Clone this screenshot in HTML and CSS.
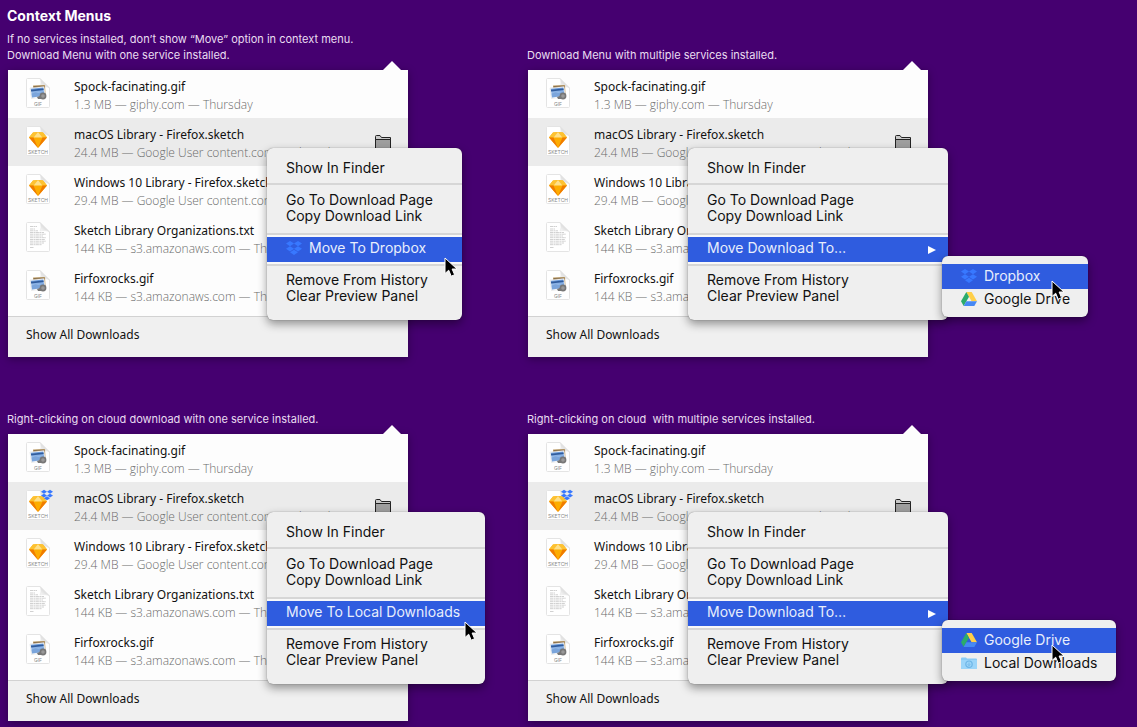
FILE: index.html
```html
<!DOCTYPE html>
<html lang="en">
<head>
<meta charset="utf-8">
<meta name="viewport" content="width=device-width, initial-scale=1">
<title>Context Menus</title>
<link rel="stylesheet" href="styles.css">
</head>
<body>
<svg class="sprite" aria-hidden="true">
  <defs>
    <linearGradient id="fold" x1="0" y1="1" x2="1" y2="0"><stop offset="0" stop-color="#fff"/><stop offset="0.5" stop-color="#ddd"/><stop offset="1" stop-color="#f6f6f6"/></linearGradient>
    <linearGradient id="sky" x1="0" y1="0" x2="0" y2="1"><stop offset="0" stop-color="#5f93d8"/><stop offset="1" stop-color="#c5dcf5"/></linearGradient>
  </defs>
  <symbol id="page" viewBox="0 0 24 30">
    <path d="M1.500.5H14L23.500 10v18.500a1 1 0 0 1-1 1h-21a1 1 0 0 1-1-1v-27a1 1 0 0 1 1-1z" fill="#fff" stroke="#e4e4e4"/>
    <path d="M14 .5c1.500 3 1 6.500 0 8.500 3-.8 7-.5 9.500 1z" fill="url(#fold)" stroke="#e2e2e2" stroke-width=".5"/>
  </symbol>
  <symbol id="gif" viewBox="0 0 24 30">
    <use href="#page"/>
    <path d="M7 7.500l12-.6.6 9-12 1z" fill="#c7a873"/>
    <path d="M7.500 8l11-.5.100 2-11 .8z" fill="#8c7149"/>
    <path d="M4 10l14-1.500 1.600 10L5.500 20.500z" fill="#fff" stroke="#ccc" stroke-width=".4"/>
    <path d="M4.800 10.700l12.500-1.300 1.300 8.400L6 19.500z" fill="url(#sky)"/>
    <path d="M5.600 15.500l4-1.200 3 .8 5.500-1.500.5 4.200L6 19.500z" fill="#7ba5db"/>
    <path d="M4.900 11.800l12.600-1.300.2 1.600-12.500 1.300z" fill="#315c9c"/>
    <circle cx="17" cy="18" r="3.400" fill="#777"/><circle cx="17" cy="18" r="1.800" fill="#999"/>
    <path d="M11 19l4-1.500v3.500h-3z" fill="#777"/>
    <text x="12" y="27.500" class="doc-label">GIF</text>
  </symbol>
  <symbol id="sketch" viewBox="0 0 24 30">
    <use href="#page"/>
    <path d="M7 6.500L12 6l5 .5 4 5L12 22 3 11.500z" fill="#fdad00"/>
    <path d="M7 6.500L12 6l-4.500 5.500H3z" fill="#fdc231"/>
    <path d="M17 6.500L12 6l4.500 5.500H21z" fill="#fdc231"/>
    <path d="M12 6l4.500 5.500h-9z" fill="#fee08a"/>
    <path d="M3 11.500h4.500L12 22zM21 11.500h-4.500L12 22z" fill="#f07c00"/>
    <text x="12" y="27.500" class="doc-label">SKETCH</text>
  </symbol>
  <symbol id="txt" viewBox="0 0 24 30">
    <use href="#page"/>
    <path d="M4 4.500h7M4 7h5M4 8.800h8M4 10.500h14M4 12.200h16M4 14h13M4 15.700h16M4 17.500h15M4 19.200h16M4 21h14M4 22.700h12M4 25.500h4" stroke="#ccc" stroke-width=".9" stroke-dasharray="3 .5 2 .4" fill="none"/>
  </symbol>
  <symbol id="dropbox" viewBox="0 0 16 14">
    <path d="M4 0l4 2.600-4 2.600L0 2.600zM12 0l4 2.600-4 2.600-4-2.600zM4 5.200l4 2.600-4 2.600-4-2.600zM12 5.200l4 2.600-4 2.600-4-2.600zM8 8.700l4 2.600L8 14l-4-2.700z" fill="#3878ff"/>
  </symbol>
  <symbol id="drive" viewBox="0 0 16 14">
    <path d="M5.300 0h5.400L16 9.300h-5.400z" fill="#ffcf48"/>
    <path d="M5.300 0L8 4.700 2.700 14 0 9.300z" fill="#2bab6b"/>
    <path d="M5.400 9.300H16L13.300 14H2.700z" fill="#4688f4"/>
  </symbol>
  <symbol id="local" viewBox="0 0 16 14">
    <path d="M0 2.500a1 1 0 0 1 1-1h4l1 1h9a1 1 0 0 1 1 1V12a1 1 0 0 1-1 1H1a1 1 0 0 1-1-1z" fill="#8acbf5"/>
    <path d="M0 4h16v8a1 1 0 0 1-1 1H1a1 1 0 0 1-1-1z" fill="#9cd5f9"/>
    <circle cx="8" cy="8.200" r="3.200" fill="none" stroke="#6db5e6" stroke-width="1.200"/>
    <path d="M8 6.500v3M6.700 8.300L8 9.700l1.300-1.400" fill="none" stroke="#6db5e6" stroke-width=".8"/>
  </symbol>
  <symbol id="folder" viewBox="0 0 16 16">
    <path d="M.5 15.500V1.500a1 1 0 0 1 1-1h3.500l1.500 2h9v13z" fill="#c8c8c8" stroke="#222"/>
    <path d="M.5 4.500h15v11H.5z" fill="#9e9e9e" stroke="#222"/>
  </symbol>
  <symbol id="pointer" viewBox="0 0 14 21">
    <path d="M1 1v15.500l3.700-3.300 2.500 6 3.400-1.500L8.100 12H13z" fill="#000" stroke="#fff" stroke-width="1"/>
  </symbol>
</svg>

<main class="sheet">
  <header class="intro">
    <h1 class="title">Context Menus</h1>
    <p class="note">If no services installed, don’t show “Move” option in context menu.</p>
  </header>

  <section class="example">
    <h2 class="note">Download Menu with one service installed.</h2>
    <div class="panel">
      <ul class="downloads">
        <li class="download"><svg class="doc"><use href="#gif"/></svg><div class="info"><p class="name">Spock-facinating.gif</p><p class="meta">1.3 MB — giphy.com — Thursday</p></div></li>
        <li class="download selected"><svg class="doc"><use href="#sketch"/></svg><div class="info"><p class="name">macOS Library - Firefox.sketch</p><p class="meta">24.4 MB — Google User content.com — Thursday</p></div><button class="reveal" aria-label="Show in folder"><svg class="folder"><use href="#folder"/></svg></button></li>
        <li class="download"><svg class="doc"><use href="#sketch"/></svg><div class="info"><p class="name">Windows 10 Library - Firefox.sketch</p><p class="meta">29.4 MB — Google User content.com — Thursday</p></div></li>
        <li class="download"><svg class="doc"><use href="#txt"/></svg><div class="info"><p class="name">Sketch Library Organizations.txt</p><p class="meta">144 KB — s3.amazonaws.com — Thursday</p></div></li>
        <li class="download"><svg class="doc"><use href="#gif"/></svg><div class="info"><p class="name">Firfoxrocks.gif</p><p class="meta">144 KB — s3.amazonaws.com — Thursday</p></div></li>
      </ul>
      <button class="show-all">Show All Downloads</button>
      <div class="menu menu-single">
        <div class="group first"><button class="item">Show In Finder</button></div>
        <div class="group second"><button class="item">Go To Download Page</button><button class="item">Copy Download Link</button></div>
        <div class="group move"><button class="item active"><svg class="service"><use href="#dropbox"/></svg>Move To Dropbox</button></div>
        <div class="group last"><button class="item">Remove From History</button><button class="item">Clear Preview Panel</button></div>
        <svg class="pointer"><use href="#pointer"/></svg>
      </div>
    </div>
  </section>

  <section class="example">
    <h2 class="note">Download Menu with multiple services installed.</h2>
    <div class="panel">
      <ul class="downloads">
        <li class="download"><svg class="doc"><use href="#gif"/></svg><div class="info"><p class="name">Spock-facinating.gif</p><p class="meta">1.3 MB — giphy.com — Thursday</p></div></li>
        <li class="download selected"><svg class="doc"><use href="#sketch"/></svg><div class="info"><p class="name">macOS Library - Firefox.sketch</p><p class="meta">24.4 MB — Google User content.com — Thursday</p></div><button class="reveal" aria-label="Show in folder"><svg class="folder"><use href="#folder"/></svg></button></li>
        <li class="download"><svg class="doc"><use href="#sketch"/></svg><div class="info"><p class="name">Windows 10 Library - Firefox.sketch</p><p class="meta">29.4 MB — Google User content.com — Thursday</p></div></li>
        <li class="download"><svg class="doc"><use href="#txt"/></svg><div class="info"><p class="name">Sketch Library Organizations.txt</p><p class="meta">144 KB — s3.amazonaws.com — Thursday</p></div></li>
        <li class="download"><svg class="doc"><use href="#gif"/></svg><div class="info"><p class="name">Firfoxrocks.gif</p><p class="meta">144 KB — s3.amazonaws.com — Thursday</p></div></li>
      </ul>
      <button class="show-all">Show All Downloads</button>
      <div class="menu menu-multi">
        <div class="group first"><button class="item">Show In Finder</button></div>
        <div class="group second"><button class="item">Go To Download Page</button><button class="item">Copy Download Link</button></div>
        <div class="group move"><button class="item active">Move Download To…<span class="arrow"></span></button></div>
        <div class="group last"><button class="item">Remove From History</button><button class="item">Clear Preview Panel</button></div>
      </div>
      <div class="menu submenu">
        <button class="item active"><svg class="service"><use href="#dropbox"/></svg>Dropbox</button>
        <button class="item"><svg class="service"><use href="#drive"/></svg>Google Drive</button>
        <svg class="pointer"><use href="#pointer"/></svg>
      </div>
    </div>
  </section>

  <section class="example">
    <h2 class="note">Right-clicking on cloud download with one service installed.</h2>
    <div class="panel">
      <ul class="downloads">
        <li class="download"><svg class="doc"><use href="#gif"/></svg><div class="info"><p class="name">Spock-facinating.gif</p><p class="meta">1.3 MB — giphy.com — Thursday</p></div></li>
        <li class="download selected"><svg class="doc"><use href="#sketch"/></svg><svg class="cloud-badge"><use href="#dropbox"/></svg><div class="info"><p class="name">macOS Library - Firefox.sketch</p><p class="meta">24.4 MB — Google User content.com — Thursday</p></div><button class="reveal" aria-label="Show in folder"><svg class="folder"><use href="#folder"/></svg></button></li>
        <li class="download"><svg class="doc"><use href="#sketch"/></svg><div class="info"><p class="name">Windows 10 Library - Firefox.sketch</p><p class="meta">29.4 MB — Google User content.com — Thursday</p></div></li>
        <li class="download"><svg class="doc"><use href="#txt"/></svg><div class="info"><p class="name">Sketch Library Organizations.txt</p><p class="meta">144 KB — s3.amazonaws.com — Thursday</p></div></li>
        <li class="download"><svg class="doc"><use href="#gif"/></svg><div class="info"><p class="name">Firfoxrocks.gif</p><p class="meta">144 KB — s3.amazonaws.com — Thursday</p></div></li>
      </ul>
      <button class="show-all">Show All Downloads</button>
      <div class="menu menu-local">
        <div class="group first"><button class="item">Show In Finder</button></div>
        <div class="group second"><button class="item">Go To Download Page</button><button class="item">Copy Download Link</button></div>
        <div class="group move"><button class="item active">Move To Local Downloads</button></div>
        <div class="group last"><button class="item">Remove From History</button><button class="item">Clear Preview Panel</button></div>
        <svg class="pointer"><use href="#pointer"/></svg>
      </div>
    </div>
  </section>

  <section class="example">
    <h2 class="note">Right-clicking on cloud&nbsp; with multiple services installed.</h2>
    <div class="panel">
      <ul class="downloads">
        <li class="download"><svg class="doc"><use href="#gif"/></svg><div class="info"><p class="name">Spock-facinating.gif</p><p class="meta">1.3 MB — giphy.com — Thursday</p></div></li>
        <li class="download selected"><svg class="doc"><use href="#sketch"/></svg><svg class="cloud-badge"><use href="#dropbox"/></svg><div class="info"><p class="name">macOS Library - Firefox.sketch</p><p class="meta">24.4 MB — Google User content.com — Thursday</p></div><button class="reveal" aria-label="Show in folder"><svg class="folder"><use href="#folder"/></svg></button></li>
        <li class="download"><svg class="doc"><use href="#sketch"/></svg><div class="info"><p class="name">Windows 10 Library - Firefox.sketch</p><p class="meta">29.4 MB — Google User content.com — Thursday</p></div></li>
        <li class="download"><svg class="doc"><use href="#txt"/></svg><div class="info"><p class="name">Sketch Library Organizations.txt</p><p class="meta">144 KB — s3.amazonaws.com — Thursday</p></div></li>
        <li class="download"><svg class="doc"><use href="#gif"/></svg><div class="info"><p class="name">Firfoxrocks.gif</p><p class="meta">144 KB — s3.amazonaws.com — Thursday</p></div></li>
      </ul>
      <button class="show-all">Show All Downloads</button>
      <div class="menu menu-multi">
        <div class="group first"><button class="item">Show In Finder</button></div>
        <div class="group second"><button class="item">Go To Download Page</button><button class="item">Copy Download Link</button></div>
        <div class="group move"><button class="item active">Move Download To…<span class="arrow"></span></button></div>
        <div class="group last"><button class="item">Remove From History</button><button class="item">Clear Preview Panel</button></div>
      </div>
      <div class="menu submenu submenu-local">
        <button class="item active"><svg class="service"><use href="#drive"/></svg>Google Drive</button>
        <button class="item"><svg class="service"><use href="#local"/></svg>Local Downloads</button>
        <svg class="pointer"><use href="#pointer"/></svg>
      </div>
    </div>
  </section>
</main>
</body>
</html>
```
FILE: styles.css
```css
* { box-sizing: border-box; }
body {
  margin: 0;
  background: #450070;
  font-family: Inter, "Liberation Sans", sans-serif;
}
h1, h2, p, ul { margin: 0; padding: 0; }
button {
  margin: 0;
  padding: 0;
  border: 0;
  background: none;
  font: inherit;
  color: inherit;
  text-align: left;
}
.sprite { position: absolute; width: 0; height: 0; }
.sheet {
  display: grid;
  grid-template-columns: repeat(2, minmax(400px, 520px));
  padding: 4px 7px 6px;
}
.intro { grid-column: 1 / -1; }
.example:nth-of-type(n + 3) { margin-top: 54px; }
.title { margin-bottom: 3px; font-size: 14px; line-height: 24px; font-weight: 700; color: #fff; }
.note { font-size: 11px; line-height: 16px; font-weight: 400; color: #e9ddf0; }
.panel {
  position: relative;
  width: 400px;
  margin: 7px 0 0 1px;
  background: #fdfdfd;
  box-shadow: 0 2px 8px rgba(0, 0, 0, 0.35);
  font-family: "Noto Sans", "Open Sans", sans-serif;
}
.panel::before {
  content: "";
  position: absolute;
  right: 7px;
  top: -9px;
  border: solid transparent;
  border-width: 0 9px 9px;
  border-bottom-color: #fdfdfd;
}
.downloads { list-style: none; padding-bottom: 6px; }
.download { position: relative; display: flex; height: 48px; padding: 8px 17px 0 18px; }
.selected { background: #ebebeb; }
.doc { flex: none; width: 24px; height: 30px; margin-right: 24px; }
.doc-label { font: 5px Inter, sans-serif; fill: #888; text-anchor: middle; }
.cloud-badge { position: absolute; left: 33px; top: 7px; width: 12px; height: 12px; }
.info { flex: 1; min-width: 0; white-space: nowrap; }
.name { font-size: 12px; line-height: 18px; color: #111; }
.meta { font-family: "Open Sans", sans-serif; font-size: 12px; line-height: 18px; font-weight: 300; color: #6c6c6c; }
.reveal { align-self: flex-start; margin-top: 9px; }
.folder { display: block; width: 16px; height: 16px; }
.show-all {
  display: block;
  width: 100%;
  height: 41px;
  padding: 0 18px 5px;
  border-top: 1px solid #d2d2d2;
  background: #f0f0f0;
  font-size: 12px;
  color: #111;
}
.menu {
  position: absolute;
  top: 78px;
  padding-top: 12px;
  border-radius: 6px;
  background: #efefef;
  box-shadow: 0 0 1px rgba(0, 0, 0, 0.5), 0 4px 10px rgba(0, 0, 0, 0.4);
  font-family: Inter, "Liberation Sans", sans-serif;
  font-size: 14px;
  color: #111;
}
.menu-single { left: 259px; width: 195px; }
.menu-local { left: 259px; width: 218px; }
.menu-multi { left: 160px; width: 260px; }
.group + .group { border-top: 2px solid #d6d6d6; }
.first { padding-bottom: 7px; }
.second { padding: 7px 0 9px; }
.move { padding: 2px 0; background: #f8f8f8; }
.last { padding: 6px 0 16px; }
.item { display: flex; align-items: center; width: 100%; padding: 0 19px; line-height: 16px; white-space: nowrap; }
.item.active { padding-top: 3px; padding-bottom: 6px; background: #2f5cdf; color: #e8eefc; }
.service { flex: none; width: 16px; height: 14px; margin-right: 7px; }
.arrow { margin: 3px -7px 0 auto; border: solid transparent; border-width: 4px 0 4px 8px; border-left-color: #fff; }
.submenu { left: 414px; top: 186px; width: 146px; padding: 8px 0 10px; }
.submenu-local { width: 174px; }
.submenu .item.active { padding-top: 4px; padding-bottom: 5px; }
.submenu .item + .item { padding-top: 2px; }
.pointer { position: absolute; width: 14px; height: 21px; }
.menu-single .pointer { right: 4px; top: 109px; }
.menu-local .pointer { right: 7px; top: 109px; }
.submenu .pointer { left: 109px; top: 24px; }
```
